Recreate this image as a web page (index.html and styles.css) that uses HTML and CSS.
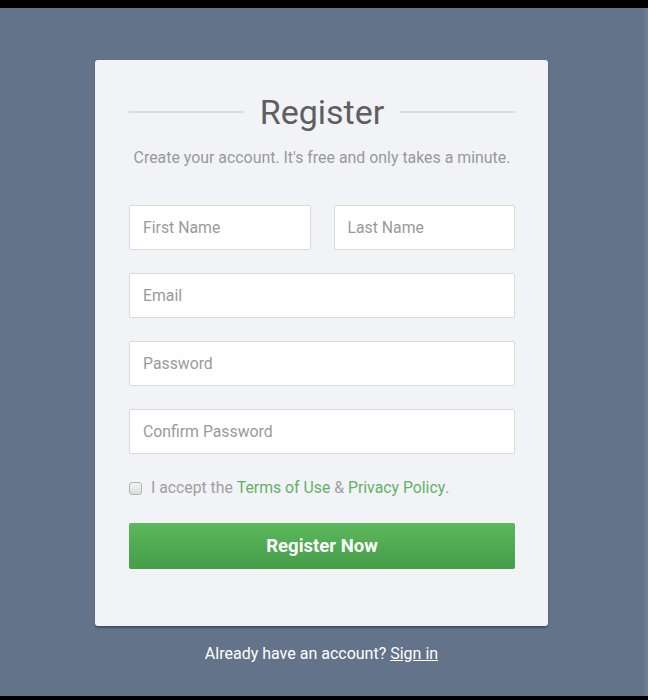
FILE: index.html
```html
<!DOCTYPE html>
<html>
<head>
<meta charset="utf-8">
<link rel="stylesheet" href="styles.css">
</head>
<body>
<div class="page">
  <div class="wrap">
    <form class="card">
      <h2 class="title"><span>Register</span></h2>
      <p class="hint">Create your account. It's free and only takes a minute.</p>
      <div class="row">
        <input class="field" type="text" placeholder="First Name">
        <input class="field" type="text" placeholder="Last Name">
      </div>
      <input class="field" type="email" placeholder="Email">
      <input class="field" type="password" placeholder="Password">
      <input class="field" type="password" placeholder="Confirm Password">
      <label class="terms"><input type="checkbox" class="check"> I accept the <a href="#">Terms of Use</a> &amp; <a href="#">Privacy Policy</a>.</label>
      <button type="button" class="btn">Register Now</button>
    </form>
    <p class="foot">Already have an account? <a href="#">Sign in</a></p>
  </div>
</div>
</body>
</html>
```
FILE: styles.css
```css
html, body {
  margin: 0;
  padding: 0;
  background: #000;
}
body {
  font-family: Roboto, "Liberation Sans", sans-serif;
  width: 648px;
  height: 700px;
  overflow: hidden;
}
.page {
  margin-top: 8px;
  width: 645px;
  height: 688px;
  background: #63738a;
  border-right: 3px solid #6f7d92;
}
.wrap {
  width: 453px;
  margin-left: 95px;
  padding-top: 52px;
}
.card {
  background: #f2f3f7;
  border-radius: 3px;
  box-shadow: 0 2px 2px rgba(0, 0, 0, 0.3);
  padding: 28px 33px 57px 34px;
  display: flex;
  flex-direction: column;
  gap: 23px;
}
.title {
  margin: 0;
  display: flex;
  align-items: center;
  gap: 16px;
  font-size: 34px;
  font-weight: 400;
  line-height: 48px;
  color: #5f5f5f;
}
.title::before, .title::after {
  content: "";
  flex: 1;
  height: 2px;
  background: #dadcdf;
}
.hint {
  margin: -11px 0 14px;
  text-align: center;
  color: #999;
  font-size: 15.9px;
  line-height: 20px;
}
.row {
  display: flex;
  gap: 23px;
}
.row .field {
  flex: 1;
  min-width: 0;
}
.field {
  box-sizing: border-box;
  height: 45px;
  margin: 0;
  border: 1px solid #d9dadd;
  border-radius: 2px;
  background: #fff;
  padding: 0 13px;
  font-family: inherit;
  font-size: 15.8px;
  color: #555;
  outline: none;
}
.field::placeholder {
  color: #9a9a9a;
}
.terms {
  display: flex;
  align-items: center;
  margin-top: 1px;
  font-size: 15.8px;
  color: #a0a0a0;
  line-height: 20px;
  white-space: pre;
}
.check {
  appearance: none;
  -webkit-appearance: none;
  box-sizing: border-box;
  margin: 0 5px 0 0;
  width: 13px;
  height: 13px;
  border: 1px solid #b3b3b3;
  border-radius: 3px;
  background: linear-gradient(#f4f4f4, #dcdcdc);
}
.terms a {
  color: #62b266;
  text-decoration: none;
}
.btn {
  margin-top: 2px;
  height: 46px;
  border: none;
  border-radius: 2px;
  background: linear-gradient(#5cb85c, #449d48);
  color: #fff;
  font-family: inherit;
  font-size: 18.5px;
  font-weight: 700;
}
.foot {
  margin: 18px 0 0;
  text-align: center;
  color: #fff;
  font-size: 16px;
}
.foot a {
  color: #fff;
  text-decoration: underline;
}
```
